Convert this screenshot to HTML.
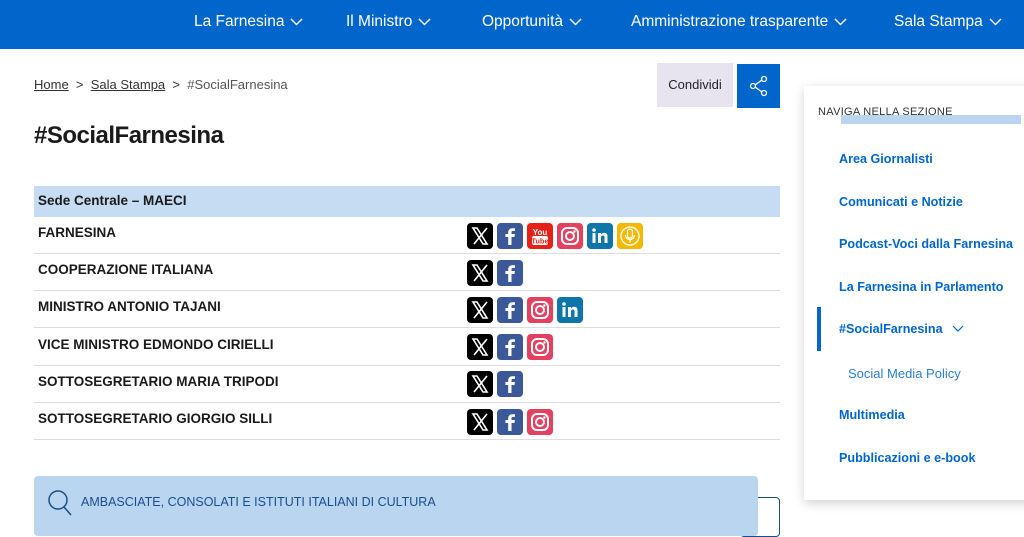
<!DOCTYPE html>
<html><head><meta charset="utf-8"><style>
*{margin:0;padding:0;box-sizing:border-box}
body{width:1024px;height:527px;overflow:hidden;background:#fff;font-family:"Liberation Sans",sans-serif;position:relative;color:#1a1a1a}
.a{position:absolute;white-space:nowrap}
.nav{position:absolute;left:0;top:0;width:1024px;height:49px;background:#0066cc}
.nav span{position:absolute;top:13px;color:#fff;font-size:15.5px}
.nav svg{vertical-align:middle;margin-left:6px}
.row{position:absolute;left:34px;width:746px;border-bottom:1.5px solid #ddd;height:37px}
.row b{position:absolute;left:4px;top:8px;font-size:13.5px;font-weight:bold}
.sb{position:absolute;left:839px;font-size:12.6px;font-weight:bold;color:#0066cc}
</style></head><body>
<div class="nav">
<span style="left:194px">La Farnesina<svg width="13" height="8"><path d="M1 1l5.5 5.5L12 1" stroke="#fff" fill="none" stroke-width="1.4"/></svg></span>
<span style="left:346px">Il Ministro<svg width="13" height="8"><path d="M1 1l5.5 5.5L12 1" stroke="#fff" fill="none" stroke-width="1.4"/></svg></span>
<span style="left:482px">Opportunità<svg width="13" height="8"><path d="M1 1l5.5 5.5L12 1" stroke="#fff" fill="none" stroke-width="1.4"/></svg></span>
<span style="left:631px">Amministrazione trasparente<svg width="13" height="8"><path d="M1 1l5.5 5.5L12 1" stroke="#fff" fill="none" stroke-width="1.4"/></svg></span>
<span style="left:894px">Sala Stampa<svg width="13" height="8"><path d="M1 1l5.5 5.5L12 1" stroke="#fff" fill="none" stroke-width="1.4"/></svg></span>
</div>
<div class="a" style="left:34px;top:77px;font-size:13px;color:#333"><u>Home</u> &nbsp;&gt;&nbsp; <u>Sala Stampa</u> &nbsp;&gt;&nbsp; <span style="color:#555">#SocialFarnesina</span></div>
<div class="a" style="left:657px;top:63px;width:76px;height:44px;background:#e8e4ef;font-size:13px;text-align:center;line-height:44px;color:#222">Condividi</div>
<div class="a" style="left:737px;top:64px;width:43px;height:44px;background:#0066cc"><svg width="43" height="44"><g stroke="#fff" fill="none" stroke-width="1.3"><circle cx="16" cy="22" r="2.5"/><circle cx="27" cy="15" r="2.5"/><circle cx="27" cy="29" r="2.5"/><path d="M18 21l7-5M18 23l7 5"/></g></svg></div>
<div class="a" style="left:34px;top:122px;font-size:24px;font-weight:bold;letter-spacing:-0.5px">#SocialFarnesina</div>
<div class="a" style="left:34px;top:186px;width:746px;height:31px;background:#c5dcf2;font-size:13.5px;font-weight:bold;padding:7px 4px">Sede Centrale – MAECI</div>
<div class="row" style="top:217px"><b>FARNESINA</b></div>
<div class="row" style="top:254px"><b>COOPERAZIONE ITALIANA</b></div>
<div class="row" style="top:291px"><b>MINISTRO ANTONIO TAJANI</b></div>
<div class="row" style="top:329px"><b>VICE MINISTRO EDMONDO CIRIELLI</b></div>
<div class="row" style="top:366px"><b>SOTTOSEGRETARIO MARIA TRIPODI</b></div>
<div class="row" style="top:403px"><b>SOTTOSEGRETARIO GIORGIO SILLI</b></div>
<svg class="a" style="left:0;top:0" width="700" height="450">
<defs>
<g id="x"><rect width="26" height="26" rx="4" fill="#000"/><path d="M6 5h4l10 16h-4z" fill="none" stroke="#fff" stroke-width="1.6"/><path d="M20 5L7 21" stroke="#fff" stroke-width="1.6"/></g>
<g id="f"><rect width="26" height="26" rx="4" fill="#3b5998"/><path d="M14.5 22v-8h3l.4-3h-3.4V9.5c0-1 .3-1.6 1.7-1.6h1.8V5.3c-.4 0-1.4-.1-2.6-.1-2.6 0-4.2 1.5-4.2 4.3V11H8.4v3h2.8v8z" fill="#fff"/></g>
<g id="i"><rect width="26" height="26" rx="4" fill="#e4405f"/><rect x="5" y="5" width="16" height="16" rx="5" fill="none" stroke="#fff" stroke-width="2"/><circle cx="13" cy="13" r="4" fill="none" stroke="#fff" stroke-width="2"/><circle cx="17.5" cy="8.5" r="1.2" fill="#fff"/></g>
<g id="l"><rect width="26" height="26" rx="4" fill="#0e76a8"/><rect x="5.5" y="10" width="3" height="10" fill="#fff"/><circle cx="7" cy="7" r="1.8" fill="#fff"/><path d="M11 10h3v1.5c.8-1.3 2-1.8 3.3-1.8 2.4 0 3.2 1.5 3.2 4V20h-3v-5.5c0-1.3-.4-2-1.6-2s-1.9.8-1.9 2.2V20h-3z" fill="#fff"/></g>
<g id="y"><rect width="26" height="26" rx="4" fill="#e62117"/><text x="13" y="12" font-size="8" font-weight="bold" fill="#fff" text-anchor="middle" font-family="Liberation Sans">You</text><rect x="5" y="13" width="16" height="9" rx="2" fill="#fff"/><text x="13" y="20.5" font-size="7.5" font-weight="bold" fill="#e62117" text-anchor="middle" font-family="Liberation Sans">Tube</text></g>
<g id="p"><rect width="26" height="26" rx="4" fill="#f5b800"/><circle cx="13" cy="13" r="9" fill="none" stroke="#fff" stroke-width="1.3"/><rect x="10.5" y="6" width="5" height="9" rx="2.5" fill="none" stroke="#fff" stroke-width="1.3"/><path d="M8.5 12a4.5 4.5 0 009 0M13 16.5v3" fill="none" stroke="#fff" stroke-width="1.3"/></g>
</defs>
<use href="#x" x="467" y="223"/><use href="#f" x="497" y="223"/><use href="#y" x="527" y="223"/><use href="#i" x="557" y="223"/><use href="#l" x="587" y="223"/><use href="#p" x="617" y="223"/>
<use href="#x" x="467" y="260"/><use href="#f" x="497" y="260"/>
<use href="#x" x="467" y="297"/><use href="#f" x="497" y="297"/><use href="#i" x="527" y="297"/><use href="#l" x="557" y="297"/>
<use href="#x" x="467" y="334"/><use href="#f" x="497" y="334"/><use href="#i" x="527" y="334"/>
<use href="#x" x="467" y="371"/><use href="#f" x="497" y="371"/>
<use href="#x" x="467" y="409"/><use href="#f" x="497" y="409"/><use href="#i" x="527" y="409"/>
</svg>
<div class="a" style="left:740px;top:497px;width:40px;height:40px;border:1.5px solid #1a4e8a;border-radius:4px"></div>
<div class="a" style="left:34px;top:476px;width:724px;height:60px;background:#b9d5f0;border-radius:4px"></div>
<svg class="a" style="left:46px;top:488px" width="28" height="30"><circle cx="12" cy="12" r="9" fill="none" stroke="#1a4e8a" stroke-width="1.5"/><path d="M18 19l7 8" stroke="#1a4e8a" stroke-width="1.5"/></svg>
<div class="a" style="left:81px;top:495px;font-size:12.5px;color:#1a4e8a">AMBASCIATE, CONSOLATI E ISTITUTI ITALIANI DI CULTURA</div>
<div class="a" style="left:804px;top:86px;width:230px;height:414px;background:#fff;box-shadow:0 3px 10px rgba(0,0,0,.18)"></div>
<div class="a" style="left:841px;top:115px;width:180px;height:9px;background:#b9d5f0"></div>
<div class="a" style="left:818px;top:106px;font-size:11px;color:#333;letter-spacing:.3px">NAVIGA NELLA SEZIONE</div>
<div class="sb a" style="top:152px">Area Giornalisti</div>
<div class="sb a" style="top:195px">Comunicati e Notizie</div>
<div class="sb a" style="top:237px">Podcast-Voci dalla Farnesina</div>
<div class="sb a" style="top:280px">La Farnesina in Parlamento</div>
<div class="a" style="left:817px;top:307px;width:4px;height:44px;background:#0066cc"></div>
<div class="sb a" style="top:322px">#SocialFarnesina <svg width="12" height="8" style="margin-left:6px"><path d="M1 1l5 5 5-5" stroke="#0066cc" fill="none" stroke-width="1.2"/></svg></div>
<div class="a" style="left:848px;top:366px;font-size:13px;color:#2a7fd4">Social Media Policy</div>
<div class="sb a" style="top:408px">Multimedia</div>
<div class="sb a" style="top:451px">Pubblicazioni e e-book</div>
</body></html>
